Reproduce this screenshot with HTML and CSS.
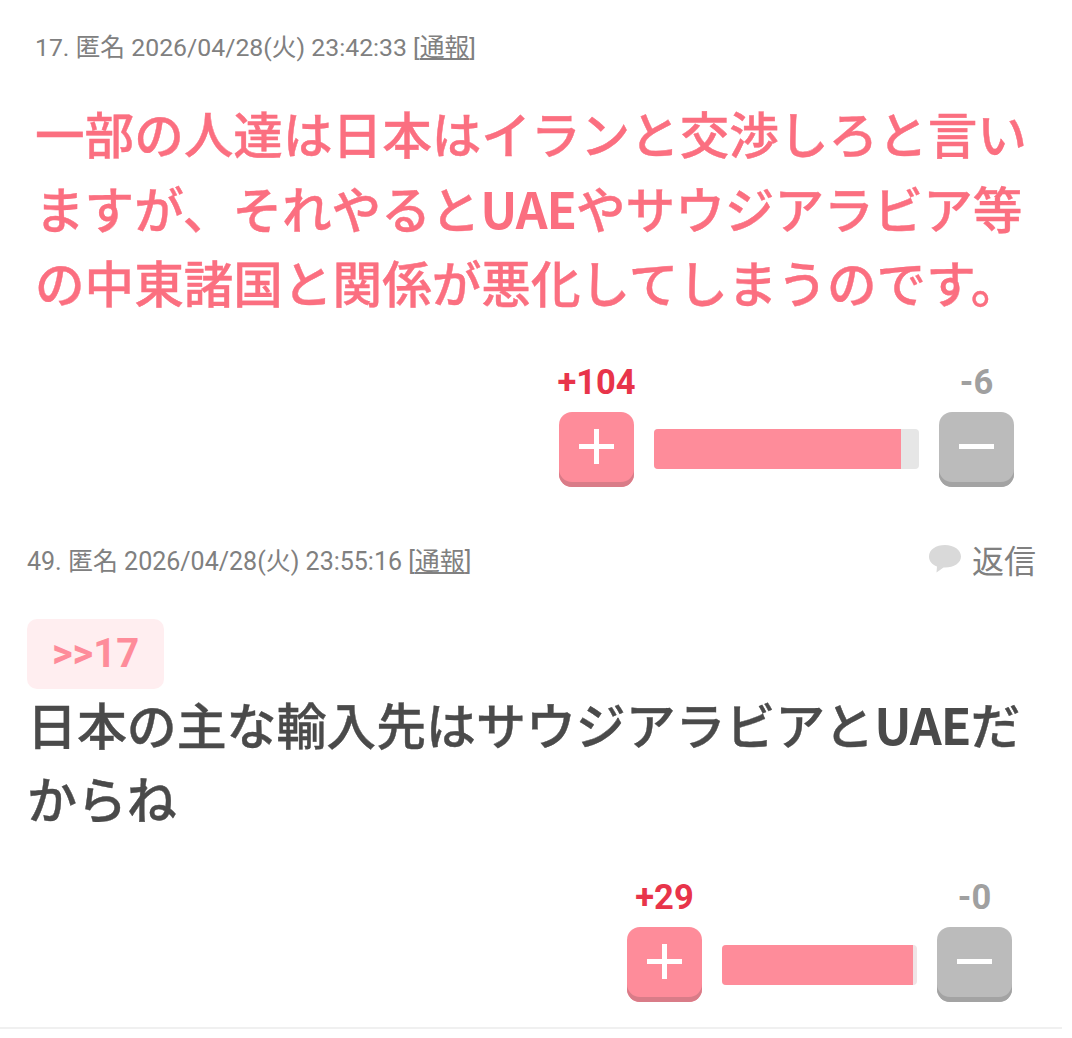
FILE: index.html
```html
<!DOCTYPE html>
<html lang="ja">
<head>
  <meta charset="UTF-8">
  <title>コメント</title>
  <link rel="stylesheet" href="styles.css">
</head>
<body>
  <div class="comment comment-first">
    <div class="meta">
      <span class="info info-first">17. 匿名 2026/04/28(火) 23:42:33 [<a class="report">通報</a>]</span>
    </div>
    <p class="body body-pink">
      <span class="line">一部の人達は日本はイランと交渉しろと言い</span>
      <span class="line">ますが、それやると<b class="latin">UAE</b>やサウジアラビア等</span>
      <span class="line">の中東諸国と関係が悪化してしまうのです。</span>
    </p>
    <div class="votes votes-first">
      <div class="vote">
        <span class="count count-plus">+104</span>
        <button class="btn btn-plus"><span class="cross"></span></button>
      </div>
      <div class="bar bar-first"><div class="bar-fill fill-first"></div></div>
      <div class="vote">
        <span class="count count-minus">-6</span>
        <button class="btn btn-minus"><span class="dash"></span></button>
      </div>
    </div>
  </div>

  <div class="comment comment-second">
    <div class="meta">
      <span class="info">49. 匿名 2026/04/28(火) 23:55:16 [<a class="report">通報</a>]</span>
      <span class="reply">
        <svg class="reply-icon" viewBox="0 0 34 30" width="34" height="30"><path d="M17 1C8 1 1 5.700 1 12.500c0 4.600 3 8.200 8 10l-.5 6 7-5h1.500c9 0 16-4.500 16-11S26 1 17 1z" fill="#d9d9d9"/></svg>
        返信
      </span>
    </div>
    <a class="anchor">&gt;&gt;17</a>
    <p class="body body-dark">
      <span class="line">日本の主な輸入先はサウジアラビアと<b class="latin">UAE</b>だ</span>
      <span class="line">からね</span>
    </p>
    <div class="votes votes-second">
      <div class="vote">
        <span class="count count-plus">+29</span>
        <button class="btn btn-plus"><span class="cross"></span></button>
      </div>
      <div class="bar bar-second"><div class="bar-fill fill-second"></div></div>
      <div class="vote">
        <span class="count count-minus">-0</span>
        <button class="btn btn-minus"><span class="dash"></span></button>
      </div>
    </div>
  </div>
  <div class="divider"></div>
</body>
</html>
```

FILE: styles.css
```css
:root {
  --pink: #fe8c9a;
  --grey: #bbbbbb;
}

body {
  margin: 0;
  background: #fff;
  font-family: Roboto, "Noto Sans CJK JP", sans-serif;
  color: #4a4a4a;
  overflow: hidden;
}

.comment-first {
  padding: 27px 44px 0 35px;
}

.comment-second {
  padding: 54px 36px 0 27px;
}

.meta {
  display: flex;
  align-items: center;
  justify-content: space-between;
  height: 36px;
}

.info {
  font-size: 25px;
  color: #808080;
}

.info-first {
  font-size: 24.800px;
}

.report {
  text-decoration: underline;
}

.reply {
  display: flex;
  align-items: center;
  gap: 10px;
  font-size: 32px;
  color: #808080;
}

.body {
  margin: 0;
  font-family: "Noto Sans CJK JP", sans-serif;
  font-weight: 500;
  -webkit-text-stroke: 0.4px currentColor;
}

.line {
  display: block;
  white-space: nowrap;
}

.latin {
  font-weight: 700;
  letter-spacing: -1px;
  -webkit-text-stroke: 0;
}

.body-pink {
  margin-top: 32px;
  font-size: 49.600px;
  line-height: 74.500px;
  color: #fb6f80;
}

.body-dark {
  margin-top: -3px;
  font-size: 49.900px;
  line-height: 74px;
  color: #4a4a4a;
}

.anchor {
  display: block;
  width: 137px;
  height: 70px;
  margin-top: 42px;
  border-radius: 10px;
  background: #ffeef0;
  color: #fe8c9a;
  font-size: 40px;
  font-weight: 700;
  line-height: 70px;
  text-align: center;
}

.votes {
  display: flex;
  justify-content: flex-end;
  align-items: flex-end;
  gap: 20px;
}

.votes-first {
  margin-top: 43px;
  margin-right: 14px;
}

.votes-second {
  margin-top: 43px;
  margin-right: 24px;
}

.vote {
  display: flex;
  flex-direction: column;
  align-items: center;
  width: 75px;
}

.count {
  font-size: 34.500px;
  font-weight: 700;
  line-height: 40px;
  margin-bottom: 10px;
  white-space: nowrap;
}

.count-plus {
  color: #e8344a;
}

.count-minus {
  color: #a0a0a0;
}

.btn {
  position: relative;
  width: 75px;
  height: 75px;
  padding: 0;
  border: none;
  border-radius: 13px;
}

.btn-plus {
  background: var(--pink);
  box-shadow: inset 0 -5px 0 #d97c88;
}

.btn-minus {
  background: var(--grey);
  box-shadow: inset 0 -5px 0 #a3a3a3;
}

.cross,
.dash {
  position: absolute;
  left: 20px;
  top: 32px;
  width: 35px;
  height: 5px;
  background: #fff;
}

.cross::after {
  content: "";
  position: absolute;
  left: 15px;
  top: -15px;
  width: 5px;
  height: 35px;
  background: #fff;
}

.bar {
  height: 40px;
  border-radius: 4px;
  background: #e6e6e6;
  overflow: hidden;
}

.bar-first {
  width: 265px;
  margin-bottom: 18px;
}

.bar-second {
  width: 195px;
  margin-bottom: 17px;
  background: #f0e4e6;
}

.bar-fill {
  height: 100%;
  background: var(--pink);
}

.fill-first {
  width: 247px;
}

.fill-second {
  width: 191px;
}

.divider {
  height: 2px;
  margin: 25px 10px 0 0;
  background: #f0f0f0;
}
```
